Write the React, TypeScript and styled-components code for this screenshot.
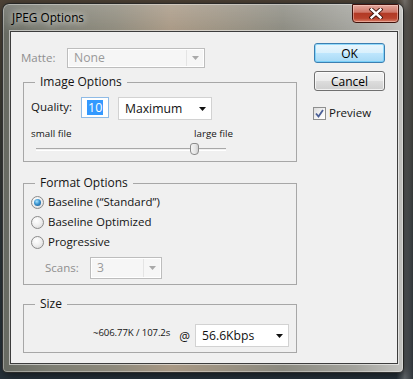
import React from 'react';
import styled, { createGlobalStyle } from 'styled-components';

const Global = createGlobalStyle`
	html, body { margin: 0; padding: 0; }
	body {
		width: 413px;
		height: 379px;
		overflow: hidden;
		background: #2a3033;
		font-family: "Open Sans", "Noto Sans", sans-serif;
		font-size: 11.5px;
		color: #141414;
	}
`;

const Desktop = styled.div`
	width: 413px;
	height: 379px;
	box-sizing: border-box;
	padding: 3px 0 0 2px;
	overflow: hidden;
	background:
		linear-gradient(90deg, rgba(0,0,0,0) 96%, rgba(150,150,150,.55) 98%, rgba(60,60,60,.4) 100%),
		linear-gradient(180deg, #4d4236 0%, #3a3a33 30%, #2c3438 60%, #26313a 100%);
`;

const Window = styled.div`
	width: 402px;
	height: 370px;
	box-sizing: border-box;
	display: flex;
	flex-direction: column;
	border: 1px solid rgba(25, 25, 25, .85);
	border-radius: 7px 7px 5px 5px;
	overflow: hidden;
	background:
		linear-gradient(180deg, rgba(255,255,255,.18) 0%, rgba(255,255,255,0) 8%),
		linear-gradient(90deg, #676a62 0%, #7d7e73 12%, #8e8a7c 28%, #a89884 42%, #9b9282 55%, #8b8a80 70%, #a3a39d 88%, #c2c2bf 100%);
	box-shadow: 2px 2px 8px rgba(0,0,0,.55), inset 0 0 0 1px rgba(255,255,255,.35);
`;

const TitleBar = styled.div`
	height: 27px;
	flex: none;
	display: flex;
	align-items: flex-start;
	justify-content: space-between;
	padding: 0 4px 0 9px;
`;

const Title = styled.div`
	margin-top: 5px;
	font-size: 11.8px;
	line-height: 16px;
	color: #000;
	text-shadow: 0 0 6px rgba(255,255,255,.85), 0 0 10px rgba(255,255,255,.5);
`;

const CloseButton = styled.div`
	width: 47px;
	height: 19px;
	box-sizing: border-box;
	display: flex;
	align-items: center;
	justify-content: center;
	border: 1px solid #40120b;
	border-radius: 0 0 4px 4px;
	background: linear-gradient(180deg, #e3a79c 0%, #cf7768 42%, #b23a25 50%, #b9422c 78%, #d9806a 100%);
	box-shadow: inset 0 0 0 1px rgba(255,220,210,.45);
`;

const FrameBody = styled.div`
	flex: 1;
	display: flex;
	padding: 0 5px 8px 7px;
`;

const Client = styled.div`
	flex: 1;
	display: flex;
	border: 1px solid #3d3d3d;
	background: #f0f0f0;
	box-shadow: 0 0 0 1px rgba(255,255,255,.55);
`;

const LeftCol = styled.div`
	width: 274px;
	padding: 16px 0 0 10px;
	display: flex;
	flex-direction: column;
`;

const RightCol = styled.div`
	padding: 11px 0 0 0;
	margin-left: 19px;
	display: flex;
	flex-direction: column;
`;

const MatteRow = styled.div`
	display: flex;
	align-items: center;
	height: 20px;
`;

const Label = styled.span<{ $disabled?: boolean; $w?: number }>`
	display: inline-block;
	width: ${({ $w }) => ($w ? `${$w}px` : 'auto')};
	color: ${({ $disabled }) => ($disabled ? '#8f8f8f' : '#141414')};
	font-size: 11.5px;
	line-height: 16px;
	white-space: nowrap;
`;

const Group = styled.fieldset<{ $top: number; $pt: number; $pb: number }>`
	margin: ${({ $top }) => $top}px 0 0 2px;
	padding: ${({ $pt }) => $pt}px 0 ${({ $pb }) => $pb}px 7px;
	border: 1px solid #a7a7a7;
	min-inline-size: 0;
	width: 274px;
	box-sizing: border-box;
	display: flex;
	flex-direction: column;
`;

const Legend = styled.legend`
	margin-left: 4px;
	padding: 0 5px;
	font-size: 12px;
	line-height: 14px;
	color: #141414;
`;

const Row = styled.div<{ $h: number; $mt?: number; $align?: string }>`
	display: flex;
	align-items: ${({ $align }) => $align || 'center'};
	height: ${({ $h }) => $h}px;
	margin-top: ${({ $mt }) => $mt || 0}px;
`;

const SelectBox = styled.div<{ $w: number; $h: number; $disabled?: boolean }>`
	width: ${({ $w }) => $w}px;
	height: ${({ $h }) => $h}px;
	box-sizing: border-box;
	display: flex;
	align-items: center;
	border: 1px solid ${({ $disabled }) => ($disabled ? '#bdbdbd' : '#d2d2d2')};
	background: ${({ $disabled }) => ($disabled ? '#f6f6f6' : '#fff')};
	box-shadow: ${({ $disabled }) => ($disabled ? 'inset 0 0 0 1px #fff' : 'none')};
`;

const SelectValue = styled.span<{ $disabled?: boolean }>`
	flex: 1;
	padding-left: 6px;
	font-size: 12.2px;
	line-height: 16px;
	color: ${({ $disabled }) => ($disabled ? '#9a9a9a' : '#111')};
	white-space: nowrap;
`;

const ArrowCell = styled.span<{ $disabled?: boolean }>`
	width: 17px;
	align-self: stretch;
	display: flex;
	align-items: center;
	justify-content: center;
	border-left: 1px solid ${({ $disabled }) => ($disabled ? '#e4e4e4' : 'transparent')};
	margin: 1px 0;
`;

const Select = ({ value, w, h, disabled = false }: { value: string; w: number; h: number; disabled?: boolean }) => (
	<SelectBox $w={w} $h={h} $disabled={disabled}>
		<SelectValue $disabled={disabled}>{value}</SelectValue>
		<ArrowCell $disabled={disabled}>
			<svg width="7" height="4" viewBox="0 0 7 4">
				<path d="M0 0H7L3.5 4Z" fill={disabled ? '#a9a9a9' : '#111'} />
			</svg>
		</ArrowCell>
	</SelectBox>
);

const QualityInput = styled.div`
	width: 28px;
	height: 21px;
	box-sizing: border-box;
	border: 1px solid #8fbbe6;
	background: #fff;
	display: flex;
	align-items: center;
	padding-left: 5px;
	margin-right: 9px;
`;

const Highlight = styled.span`
	background: #3399ff;
	color: #fff;
	font-size: 12.5px;
	line-height: 15px;
	padding: 0 1px;
`;

const SmallText = styled.span`
	font-size: 9.8px;
	line-height: 13px;
	color: #141414;
`;

const FileLabels = styled.div`
	display: flex;
	justify-content: space-between;
	width: 202px;
	height: 13px;
	margin-top: 7px;
`;

const Slider = styled.div`
	position: relative;
	width: 190px;
	height: 12px;
	margin: 3px 0 0 5px;
	display: flex;
	align-items: center;
`;

const Track = styled.div`
	flex: 1;
	height: 1px;
	border-top: 1px solid #a8a8a8;
	border-bottom: 1px solid #fff;
`;

const Thumb = styled.div`
	position: absolute;
	top: 0;
	width: 9px;
	height: 12px;
	box-sizing: border-box;
	border: 1px solid #8c8c8c;
	border-radius: 3px 3px 4px 4px;
	background: linear-gradient(90deg, #f4f4f4 0%, #e6e6e6 60%, #d0d0d0 100%);
`;

const RadioRow = styled.div`
	display: flex;
	align-items: center;
	height: 20px;
	gap: 3px;
`;

const RadioCircle = styled.span<{ $on?: boolean }>`
	width: 13px;
	height: 13px;
	box-sizing: border-box;
	border-radius: 50%;
	border: 1px solid #8b8b8b;
	background: radial-gradient(circle at 40% 35%, #ffffff 0%, #f0f0f0 45%, #d2d2d2 100%);
	display: flex;
	align-items: center;
	justify-content: center;
	margin-right: 1px;
	&::after {
		content: '';
		display: ${({ $on }) => ($on ? 'block' : 'none')};
		width: 7px;
		height: 7px;
		border-radius: 50%;
		background: radial-gradient(circle at 40% 35%, #a9e4ff 0%, #3a94d0 45%, #174e82 100%);
	}
`;

const SizeRow = styled.div`
	display: flex;
	align-items: center;
	justify-content: flex-end;
	height: 23px;
	padding-right: 7px;
`;

const Estimate = styled.span`
	font-size: 9.6px;
	line-height: 12px;
	color: #141414;
	margin-right: 9px;
	margin-bottom: 5px;
	letter-spacing: -0.1px;
`;

const At = styled.span`
	font-size: 12px;
	margin-right: 5px;
	margin-top: 2px;
`;

const Button = styled.div<{ $primary?: boolean }>`
	width: 71px;
	height: 20px;
	box-sizing: border-box;
	display: flex;
	align-items: center;
	justify-content: center;
	border-radius: 3px;
	font-size: 12px;
	color: #000;
	border: 1px solid ${({ $primary }) => ($primary ? '#3c7fb1' : '#707070')};
	background: ${({ $primary }) =>
		$primary
			? 'linear-gradient(180deg, #eaf6fd 0%, #d9f0fc 50%, #bee6fd 51%, #a7d9f5 100%)'
			: 'linear-gradient(180deg, #f2f2f2 0%, #ebebeb 50%, #dddddd 51%, #cfcfcf 100%)'};
	box-shadow: inset 0 0 0 1px ${({ $primary }) => ($primary ? 'rgba(90,200,250,.6)' : 'rgba(255,255,255,.7)')};
	& + & {
		margin-top: 8px;
	}
`;

const CheckRow = styled.div`
	display: flex;
	align-items: center;
	gap: 3px;
	margin: 15px 0 0 -1px;
	height: 14px;
`;

const CheckBox = styled.span`
	width: 13px;
	height: 13px;
	box-sizing: border-box;
	border: 1px solid #8e8f8f;
	background: linear-gradient(135deg, #dcdcdc 0%, #f6f6f6 60%, #ffffff 100%);
	display: flex;
	align-items: center;
	justify-content: center;
`;

export default function App() {
	return (
		<>
			<Global />
			<Desktop>
				<Window>
					<TitleBar>
						<Title>JPEG Options</Title>
						<CloseButton>
							<svg width="14" height="11" viewBox="0 0 14 11">
								<path d="M2.5 1.5L11.5 9.5M11.5 1.5L2.5 9.5" stroke="#3a1008" strokeWidth="4.2" strokeLinecap="square" />
								<path d="M2.5 1.5L11.5 9.5M11.5 1.5L2.5 9.5" stroke="#fff" strokeWidth="2.4" strokeLinecap="square" />
							</svg>
						</CloseButton>
					</TitleBar>
					<FrameBody>
						<Client>
							<LeftCol>
								<MatteRow>
									<Label $disabled $w={46}>Matte:</Label>
									<Select value="None" w={138} h={20} disabled />
								</MatteRow>

								<Group $top={7} $pt={8} $pb={6}>
									<Legend>Image Options</Legend>
									<Row $h={23} $align="flex-start">
										<Label $w={50} style={{ marginTop: 2 }}>Quality:</Label>
										<QualityInput>
											<Highlight>10</Highlight>
										</QualityInput>
										<Select value="Maximum" w={94} h={23} />
									</Row>
									<FileLabels>
										<SmallText>small file</SmallText>
										<SmallText>large file</SmallText>
									</FileLabels>
									<Slider>
										<Track />
										<Thumb style={{ left: 154 }} />
									</Slider>
								</Group>

								<Group $top={14} $pt={2} $pb={5}>
									<Legend>Format Options</Legend>
									<RadioRow>
										<RadioCircle $on />
										<Label>Baseline (“Standard”)</Label>
									</RadioRow>
									<RadioRow>
										<RadioCircle />
										<Label>Baseline Optimized</Label>
									</RadioRow>
									<RadioRow>
										<RadioCircle />
										<Label>Progressive</Label>
									</RadioRow>
									<Row $h={22} $mt={5}>
										<Label $disabled $w={45} style={{ marginLeft: 14 }}>Scans:</Label>
										<Select value="3" w={72} h={22} disabled />
									</Row>
								</Group>

								<Group $top={12} $pt={13} $pb={5}>
									<Legend>Size</Legend>
									<SizeRow>
										<Estimate>~606.77K / 107.2s</Estimate>
										<At>@</At>
										<Select value="56.6Kbps" w={94} h={23} />
									</SizeRow>
								</Group>
							</LeftCol>

							<RightCol>
								<Button $primary>OK</Button>
								<Button>Cancel</Button>
								<CheckRow>
									<CheckBox>
										<svg width="9" height="9" viewBox="0 0 9 9">
											<path d="M1 4.5L3.5 7.5L8 1" stroke="#4a5f97" strokeWidth="1.8" fill="none" />
										</svg>
									</CheckBox>
									<Label>Preview</Label>
								</CheckRow>
							</RightCol>
						</Client>
					</FrameBody>
				</Window>
			</Desktop>
		</>
	);
}
